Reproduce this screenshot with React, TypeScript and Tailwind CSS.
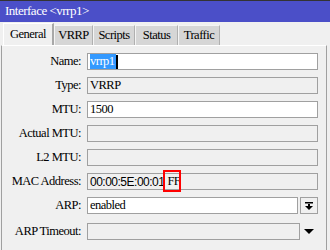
import React from "react";

const serif = { fontFamily: '"Liberation Serif", "Times New Roman", serif' };

function Row({ label, children, className = "" }: { label: string; children: React.ReactNode; className?: string }) {
  return (
    <div className={`flex items-center h-[17px] ${className}`}>
      <div className="w-[80px] text-right pr-[1px] text-black leading-none">{label}</div>
      <div className="ml-[5px] flex items-center">{children}</div>
    </div>
  );
}

function Box({ white, children, w = "w-[231px]" }: { white?: boolean; children?: React.ReactNode; w?: string }) {
  return (
    <div
      className={`${w} h-[17px] border border-[#a0a0a0] ${white ? "bg-white" : "bg-[#f0f0f0]"} flex items-center pl-[2px] text-black leading-none overflow-hidden`}
    >
      {children}
    </div>
  );
}

export default function App() {
  const tabs = [
    { name: "VRRP", w: "w-[39px]" },
    { name: "Scripts", w: "w-[42px]" },
    { name: "Status", w: "w-[43px]" },
    { name: "Traffic", w: "w-[42px]" },
  ];
  return (
    <div
      className="w-[330px] h-[250px] bg-[#f0f0f0] overflow-hidden text-[12.5px] tracking-[-0.5px] flex flex-col"
      style={serif}
    >
      <div className="border-t border-[#333333] h-[22px] bg-[#4b4fc8] text-white flex items-center pl-[5px] pb-[1px] text-[13px]">
        Interface &lt;vrrp1&gt;
      </div>
      <div className="flex items-end pl-[3px] h-[23px]">
        <div className="w-[51px] h-[22px] bg-[#f0f0f0] border-l border-t border-white border-r-2 border-r-[#a8a8a8] flex items-center justify-center pb-[1px]">
          General
        </div>
        {tabs.map((t) => (
          <div
            key={t.name}
            className={`${t.w} h-[20px] bg-[#d6d6d6] border-l border-t border-[#f4f4f4] border-r border-r-[#b0b0b0] flex items-center justify-center`}
          >
            {t.name}
          </div>
        ))}
        <div className="flex-1" />
      </div>
      <div className="flex-1 ml-[1px] mr-[3px] border-l border-r border-[#a0a0a0] border-t border-t-white flex flex-col pt-[7px] gap-[7px]">
        <Row label="Name:">
          <Box white>
            <span className="bg-[#3399ff] text-white h-[15px] flex items-center pr-[1px]">vrrp1</span>
            <span className="w-[2px] h-[14px] bg-black" />
          </Box>
        </Row>
        <Row label="Type:">
          <Box>VRRP</Box>
        </Row>
        <Row label="MTU:">
          <Box white>1500</Box>
        </Row>
        <Row label="Actual MTU:">
          <Box />
        </Row>
        <Row label="L2 MTU:">
          <Box />
        </Row>
        <Row label="MAC Address:">
          <div className="relative">
            <Box>
              <span
                className="text-[12px] tracking-[-0.5px]"
                style={{ fontFamily: '"Liberation Sans", Arial, sans-serif' }}
              >
                00:00:5E:00:01
              </span>
              <span className="ml-[3px]">FF</span>
            </Box>
            <div className="absolute left-[76px] top-[-3px] w-[18px] h-[22px] border-2 border-[#ff0000]" />
          </div>
        </Row>
        <Row label="ARP:">
          <Box white w="w-[211px]">enabled</Box>
          <div className="ml-[2px] w-[18px] h-[17px] border border-[#a0a0a0] bg-[#f0f0f0] flex items-center justify-center">
            <svg width="10" height="10" viewBox="0 0 10 10">
              <rect x="1" y="1" width="8" height="1.5" fill="black" />
              <rect x="4" y="3" width="2" height="3" fill="black" />
              <polygon points="1,5 9,5 5,9" fill="black" />
            </svg>
          </div>
        </Row>
        <Row label="ARP Timeout:" className="mt-[2px]">
          <Box w="w-[213px]" />
          <div className="w-[18px] flex items-center justify-center">
            <svg width="10" height="6" viewBox="0 0 10 6">
              <polygon points="0,0 10,0 5,5" fill="black" />
            </svg>
          </div>
        </Row>
      </div>
    </div>
  );
}
